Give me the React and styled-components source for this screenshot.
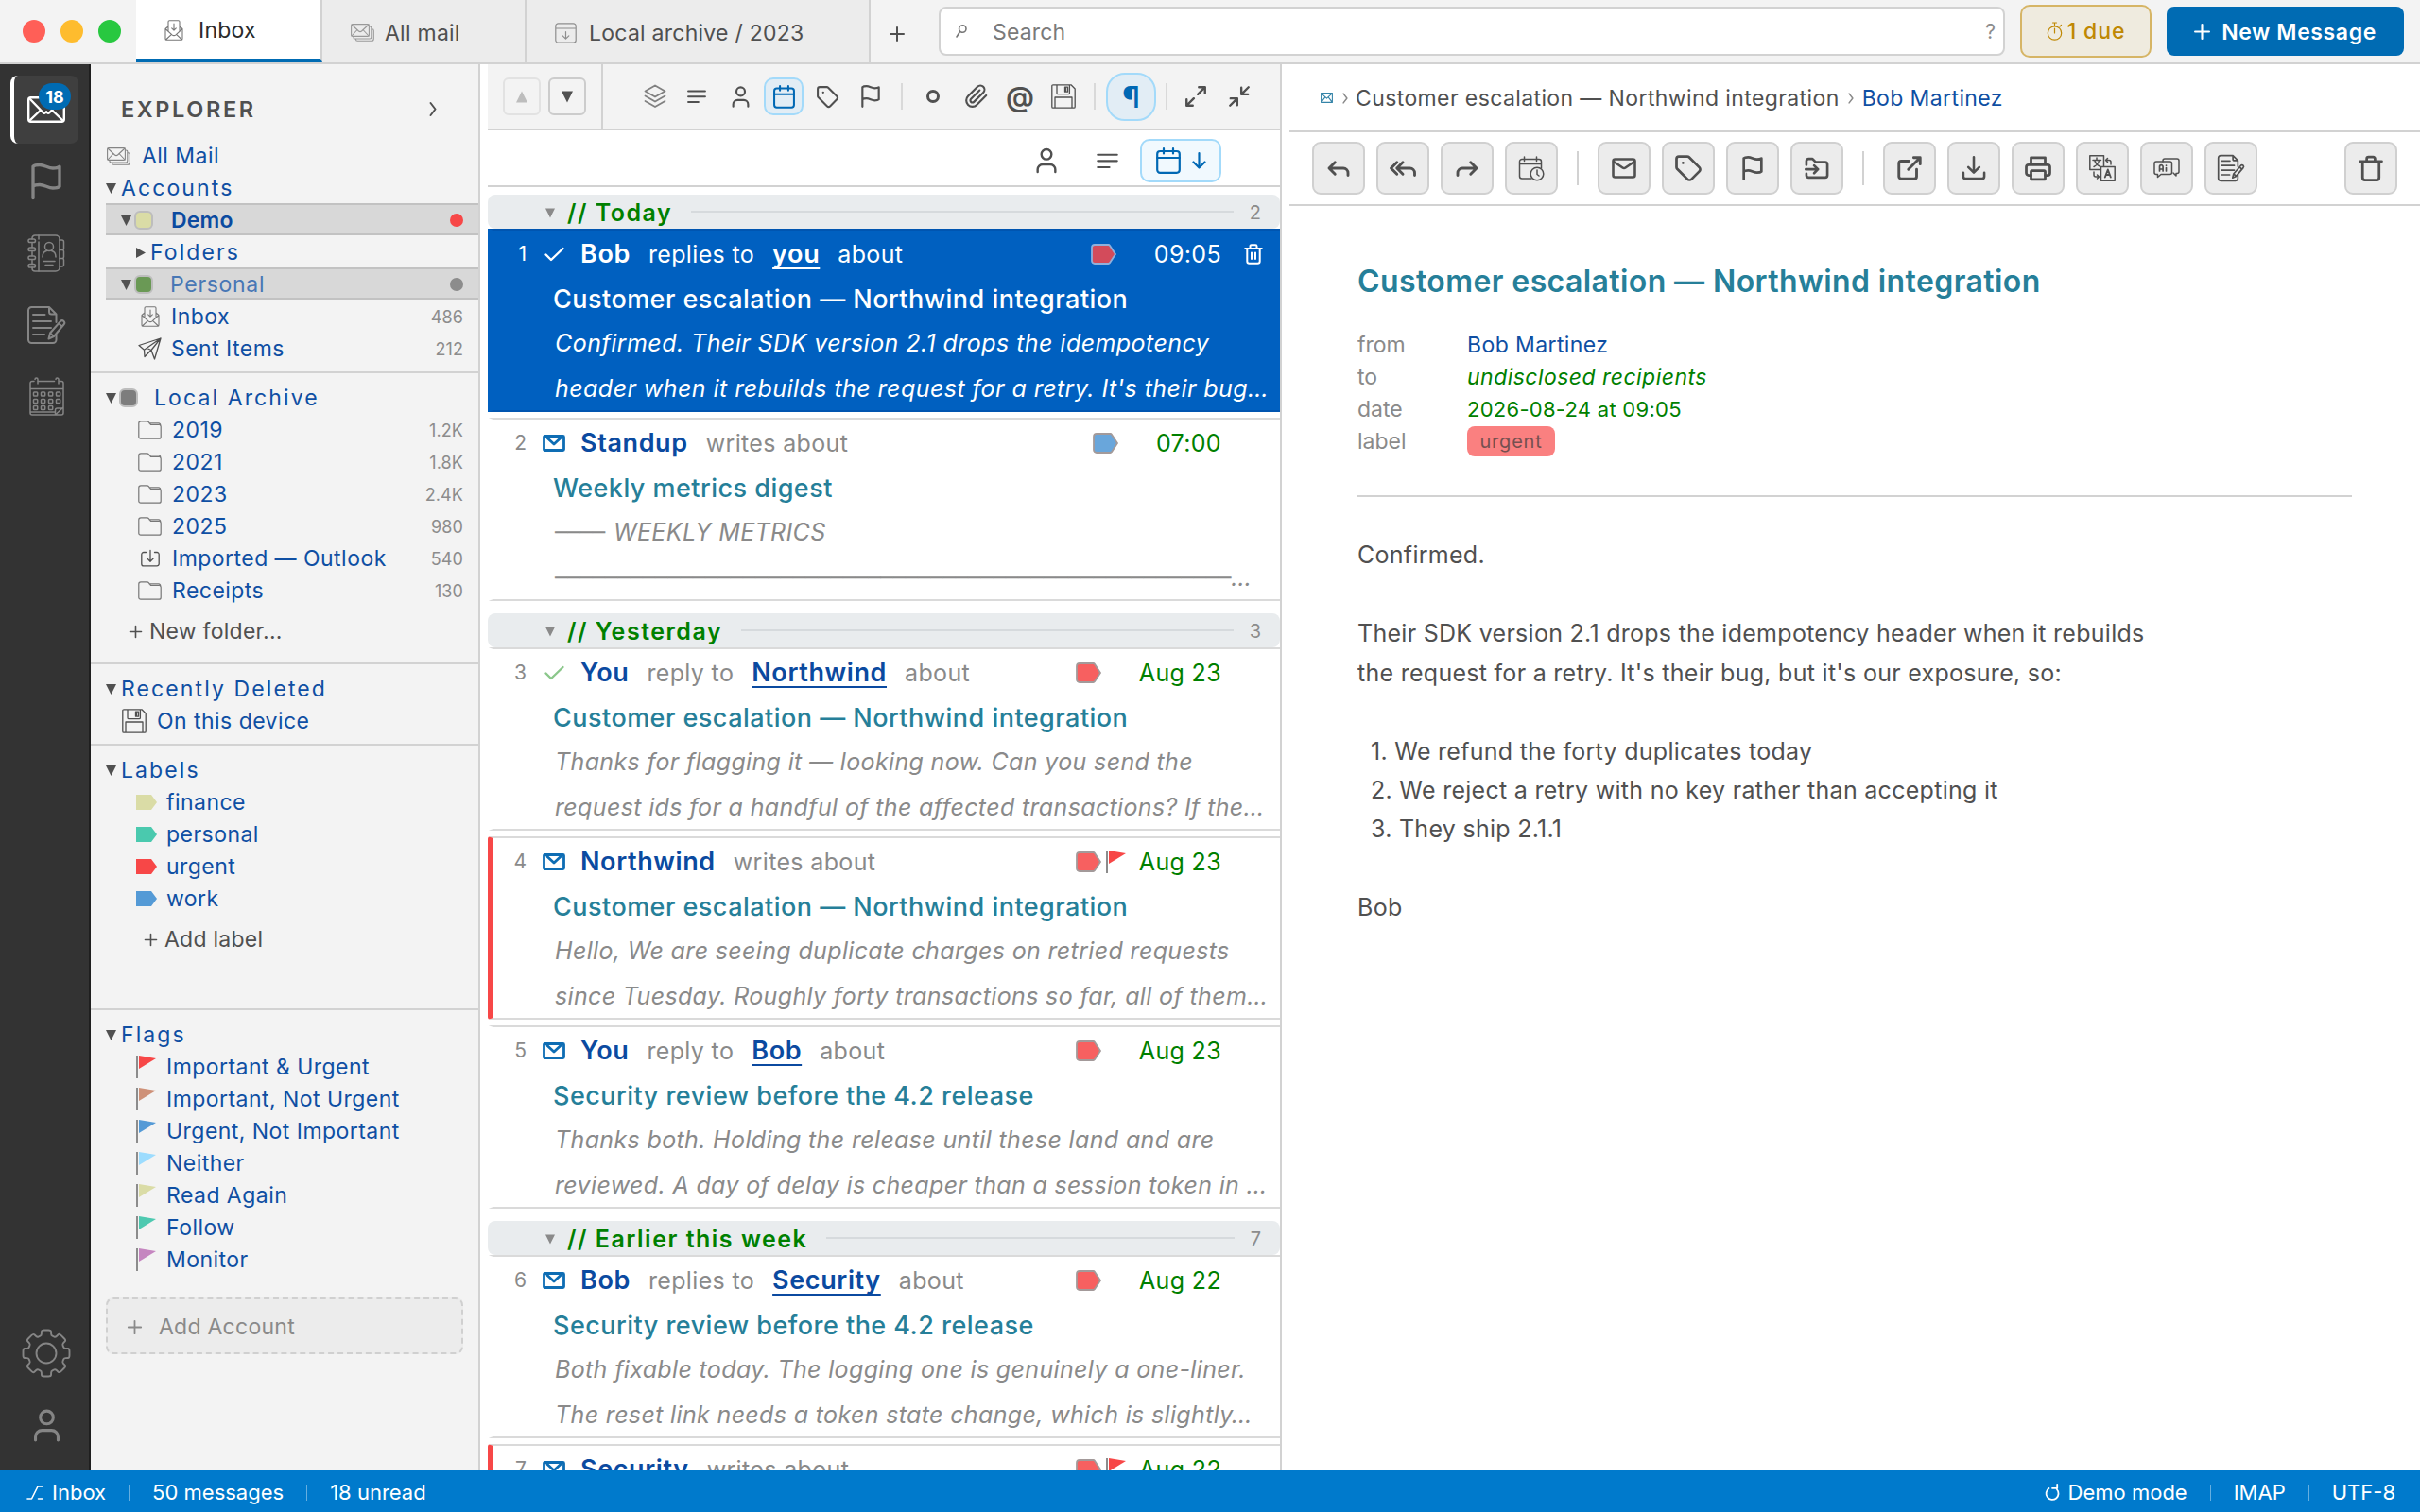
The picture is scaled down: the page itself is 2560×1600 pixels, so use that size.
import React from 'react';
import styled, { createGlobalStyle, css } from 'styled-components';

const GlobalStyle = createGlobalStyle`
  * { box-sizing: border-box; }
  html, body { margin: 0; padding: 0; }
  body {
    width: 2560px;
    height: 1600px;
    overflow: hidden;
    background: #ffffff;
    color: #505050;
    font-family: Inter, "Noto Sans", sans-serif;
    font-size: 23px;
  }
`;

/* ---------- icons ---------- */

const Svg = styled.svg`
  display: block;
  flex: none;
  overflow: visible;
`;

const Line = ({ w, h = w, vw = 24, vh = 24, sw = 2, children, color = 'currentColor' }) => (
  <Svg width={w} height={h} viewBox={`0 0 ${vw} ${vh}`} fill="none" stroke={color}
    strokeWidth={sw} strokeLinecap="round" strokeLinejoin="round">
    {children}
  </Svg>
);

const Envelope = () => (
  <Line w={40} h={28} vw={40} vh={28} sw={2.4}>
    <rect x="1.2" y="1.2" width="37.6" height="25.6" rx="2.5" />
    <path d="M2 2l15 15.5c.8.8 1.4.4 3-1.3 1.600 1.700 2.200 2.100 3 1.300L38 2M2.500 25.500L14 14.500M37.500 25.500L26 14.500" />
  </Line>
);

const FlagIcon = ({ size = 26, sw = 2 }) => (
  <Line w={size} sw={sw}>
    <path d="M4 15s1-1 4-1 5 2 8 2 4-1 4-1V3s-1 1-4 1-5-2-8-2-4 1-4 1v19" />
  </Line>
);

const Contacts = () => (
  <Line w={40} h={40} vw={40} vh={40} sw={1.5}>
    <path d="M5 5V4a3 3 0 0 1 3-3h22a4 4 0 0 1 4 4v30a4 4 0 0 1-4 4H8a3 3 0 0 1-3-3v-1M5 9.500v4M5 18.500v4M5 27.500v3.500" />
    <path d="M12 1v4M12 8v31" />
    <rect x="1" y="5" width="7.500" height="3.600" rx="1.800" />
    <rect x="1" y="14" width="7.500" height="3.600" rx="1.800" />
    <rect x="1" y="23" width="7.500" height="3.600" rx="1.800" />
    <rect x="1" y="31.500" width="7.500" height="3.600" rx="1.800" />
    <path d="M34 6h2.500a2 2 0 0 1 2 2v7a1.500 1.500 0 0 1-1.500 1.500h-3M34 16.500h3a1.500 1.500 0 0 1 1.500 1.500v6a1.500 1.500 0 0 1-1.500 1.500h-3M34 25.500h3a1.500 1.500 0 0 1 1.500 1.500v5a2 2 0 0 1-2 2H34" />
    <circle cx="23" cy="13" r="4.500" />
    <path d="M16 24c0-3.500 2-6 4.500-6.500M30 24c0-3.500-2-6-4.500-6.500M17 28.500h12M19 32.500h8" />
  </Line>
);

const Notes = ({ size = 40, sw = 2 }) => (
  <Line w={size} vw={40} vh={40} sw={sw}>
    <path d="M30.500 30v5.500A3.500 3.500 0 0 1 27 39H4.500A3.500 3.500 0 0 1 1 35.500v-31A3.500 3.500 0 0 1 4.500 1H23l7.500 7.500V17M23 1v5a2.500 2.500 0 0 0 2.500 2.500h5" />
    <path d="M6 9h12.500M6 16h19M6 23h19M6 30h12" />
    <path d="M22.500 34.500l1.500-6L35 16a2.500 2.500 0 0 1 3.500 0 2.500 2.500 0 0 1 0 3.500L28 32z M24 28.500l4 3.500M33 18l3.500 3.500" />
  </Line>
);

const Month = () => (
  <Line w={37} h={40} vw={37} vh={40} sw={1.5}>
    <path d="M5 3.500H3a2 2 0 0 0-2 2V37a2 2 0 0 0 2 2h24.500l8.500-8V5.500a2 2 0 0 0-2-2h-2M9.500 3.500h17M1 11.500h35M1 36h26M36 31v6a2 2 0 0 1-2 2h-6.500M27.500 38.500V34a2 2 0 0 1 2-2h6" />
    <path d="M6 1.500a1.500 1.500 0 0 1 3 0V6M28 1.500a1.500 1.500 0 0 1 3 0V6" />
    {[15, 22.5, 29.5].map((y) => [4.5, 12.5, 20.5, 28.5].map((x) => (
      y > 29 && x > 28 ? null : <rect key={`${x}-${y}`} x={x} y={y} width="4.200" height="4" rx=".8" />
    )))}
  </Line>
);

const gearPath = (() => {
  const pts = [];
  for (let i = 0; i < 8; i += 1) {
    const c = (i * Math.PI) / 4 - Math.PI / 2;
    [[-0.27, 19.5], [-0.2, 25], [0.2, 25], [0.27, 19.5]].forEach(([a, r]) => {
      pts.push([26 + r * Math.cos(c + a), 26 + r * Math.sin(c + a)]);
    });
  }
  const n = pts.length;
  const mix = (p, q, t) => [p[0] + (q[0] - p[0]) * t, p[1] + (q[1] - p[1]) * t];
  const f = (p) => `${p[0].toFixed(2)} ${p[1].toFixed(2)}`;
  return pts.map((p, i) => {
    const a = mix(p, pts[(i + n - 1) % n], 0.28);
    const b = mix(p, pts[(i + 1) % n], 0.28);
    return `${i ? 'L' : 'M'}${f(a)}Q${f(p)} ${f(b)}`;
  }).join('') + 'Z';
})();

const Gear = () => (
  <Line w={52} vw={52} vh={52} sw={1.9}>
    <path d={gearPath} />
    <circle cx="26" cy="26" r="10.500" />
  </Line>
);

const Person = ({ size = 28, sw = 2 }) => (
  <Line w={size} sw={sw}>
    <path d="M19 21v-2a4 4 0 0 0-4-4H9a4 4 0 0 0-4 4v2" />
    <circle cx="12" cy="7" r="4" />
  </Line>
);

const MailStack = () => (
  <Line w={25} h={19} vw={25} vh={19} sw={1.1} color="#858585">
    <rect x=".6" y=".6" width="18.800" height="12.800" rx="1.500" />
    <path d="M1 1l7.500 7c.8.7 2.200.7 3 0L19 1M1 13l6-6.500M19 13l-6-6.500M3 13.500v1.200c0 .8.500 1.300 1.300 1.300H20c1 0 1.800-.8 1.800-1.800V4.500c0-.8-.6-1.500-1.400-1.500M5.500 16v.7c0 .9.700 1.600 1.600 1.600H22c1.300 0 2.300-1 2.300-2.300V7.500c0-1-.7-1.800-1.700-1.800" />
  </Line>
);

const InboxMail = () => (
  <Line w={20} h={22} vw={20} vh={22} sw={1.1} color="#777">
    <path d="M4 7L1 9.500V20a1.300 1.300 0 0 0 1.300 1.300h15.400A1.300 1.300 0 0 0 19 20V9.500L16 7M4 12V2A1.300 1.300 0 0 1 5.300.7h9.400A1.300 1.300 0 0 1 16 2v10M1 9.500l7 6.300c1.200 1 2.800 1 4 0l7-6.300M1.500 21l6-5.700M18.500 21l-6-5.700M10 4v7M7.700 8.900L10 11.200l2.300-2.300" />
  </Line>
);

const ArchiveBox = () => (
  <Line w={23} h={22} vw={23} vh={22} sw={1.2} color="#777">
    <path d="M3.500.8h16A2.700 2.700 0 0 1 22.200 3.500v15a2.700 2.700 0 0 1-2.700 2.700h-16A2.700 2.700 0 0 1 .8 18.500v-15A2.700 2.700 0 0 1 3.500.8zM.8 6h21.400M11.500 9.500v7.500M8.200 13.900l3.300 3.300 3.300-3.300" />
  </Line>
);

const SentIcon = () => (
  <Line w={25} h={24} vw={25} vh={24} sw={1.3}>
    <path d="M24 1L1 8.500l5.500 4.700L24 1 14 13.500l3.500 9.500L24 1M6.500 13.200L7 20.500l5-5.200M7 20.500l7-7M14 13.500l-4.500-2" />
  </Line>
);

const FolderIcon = () => (
  <Line w={25} h={20} vw={25} vh={20} sw={1.2} color="#777">
    <path d="M.8 3A2.200 2.200 0 0 1 3 .8h6.500c1 0 1.500.3 2 1L13.500 4.500h8.700a2 2 0 0 1 2 2V17.200a2 2 0 0 1-2 2H2.800a2 2 0 0 1-2-2zM12 2.800h9.700a2 2 0 0 1 2 2.500" />
  </Line>
);

const ImportIcon = () => (
  <Line w={20} h={18} vw={20} vh={18} sw={1.3}>
    <path d="M5.500 2.500H3A2.200 2.200 0 0 0 .8 4.700v10A2.200 2.200 0 0 0 3 16.900h14a2.200 2.200 0 0 0 2.200-2.200v-10A2.200 2.200 0 0 0 17 2.500h-2.500M10 .5v11.500M6.700 8.900l3.300 3.300 3.300-3.300" />
  </Line>
);

const Floppy = ({ size = 26 }) => (
  <Line w={size} vw={26} vh={26} sw={1.3}>
    <path d="M2 .8h19l4.200 4.200v19a1.200 1.200 0 0 1-1.200 1.200H2A1.200 1.200 0 0 1 .8 24V2A1.200 1.200 0 0 1 2 .8zM4 25V14h18v11M6 1v8.500c0 .8.500 1.200 1.200 1.200h11c.8 0 1.200-.5 1.200-1.200V1M14.500 3.200h3v5h-3zM15.500 3.200v5" />
  </Line>
);

const Layers = () => (
  <Line w={26} h={26} vw={26} vh={26} sw={1.8} color="#808080">
    <path d="M13 1.500l10.500 6L13 13.500 2.500 7.500zM2.500 12.500L13 18.500l10.500-6M2.500 18L13 24l10.500-6" />
  </Line>
);

const TextLines = ({ w = 22, sw = 2.3 }) => (
  <Line w={w} h={(w * 16) / 22} vw={22} vh={16} sw={sw}>
    <path d="M1.200 1.700h19.600M1.200 8h19.600M1.200 14.300h11.800" />
  </Line>
);

const CalendarIcon = ({ size = 26, sw = 2.2 }) => (
  <Line w={size} h={(size * 28) / 26} vw={26} vh={28} sw={sw}>
    <rect x="1.200" y="4" width="23.600" height="22.800" rx="3" />
    <path d="M1.200 11h23.600M8 1.200v5.300M18 1.200v5.300" />
  </Line>
);

const TagIcon = ({ size = 25, sw = 2 }) => (
  <Line w={size} sw={sw}>
    <path d="M12.586 2.586A2 2 0 0 0 11.172 2H4a2 2 0 0 0-2 2v7.172a2 2 0 0 0 .586 1.414l8.704 8.704a2.426 2.426 0 0 0 3.420 0l6.580-6.580a2.426 2.426 0 0 0 0-3.420z" />
    <circle cx="7.500" cy="7.500" r=".6" fill="currentColor" strokeWidth="1" />
  </Line>
);

const Clip = () => (
  <Line w={26} sw={2}>
    <path d="M21.440 11.050l-9.190 9.190a6 6 0 0 1-8.490-8.490l9.190-9.190a4 4 0 0 1 5.660 5.660l-9.200 9.190a2 2 0 0 1-2.830-2.830l8.490-8.480" />
  </Line>
);

const Expand = () => (
  <Line w={26} sw={2.2}>
    <path d="M15 3h6v6M14 10l7-7M9 21H3v-6M3 21l7-7" />
  </Line>
);

const Collapse = () => (
  <Line w={26} sw={2.2}>
    <path d="M14 10l7-7M20.500 10H14V3.500M3 21l7-7M3.500 14H10v6.500" />
  </Line>
);

const Reply = () => (
  <Line w={30} sw={2.3}><path d="M20 18v-2a4 4 0 0 0-4-4H4M9 17l-5-5 5-5" /></Line>
);
const ReplyAll = () => (
  <Line w={30} sw={2.3}><path d="M12 17l-5-5 5-5M22 18v-2a4 4 0 0 0-4-4H7M7 17l-5-5 5-5" /></Line>
);
const Forward = () => (
  <Line w={30} sw={2.3}><path d="M15 17l5-5-5-5M4 18v-2a4 4 0 0 1 4-4h12" /></Line>
);
const Schedule = () => (
  <Line w={28} h={27} vw={28} vh={27} sw={1.5}>
    <path d="M14 24H4a2.500 2.500 0 0 1-2.500-2.500V6A2.500 2.500 0 0 1 4 3.500h18A2.500 2.500 0 0 1 24.500 6v7M1.500 8.500h23M6.500 1v4.500M19.500 1v4.500M11 3.500h4" />
    <circle cx="20" cy="19" r="6.800" />
    <path d="M20 15v4.500l2 1.500" />
  </Line>
);
const MailIcon = () => (
  <Line w={26} h={22} vw={26} vh={22} sw={2.6}>
    <rect x="1.500" y="1.500" width="23" height="19" rx="2" />
    <path d="M2 4l9.500 6.500c.9.600 2.100.6 3 0L24 4" />
  </Line>
);
const MoveIcon = () => (
  <Line w={28} sw={2.3}>
    <path d="M2.500 9V5.500a2 2 0 0 1 2-2H8l3 3h8.500a2 2 0 0 1 2 2v10a2 2 0 0 1-2 2h-15a2 2 0 0 1-2-2V17M2 13h11M9.500 9.500L13 13l-3.500 3.500" />
  </Line>
);
const OpenIcon = () => (
  <Line w={30} sw={2.3}>
    <path d="M15.500 3H21v5.500M11 13L21 3M18 13v6a2 2 0 0 1-2 2H5a2 2 0 0 1-2-2V8a2 2 0 0 1 2-2h6.500" />
  </Line>
);
const DownloadIcon = () => (
  <Line w={28} sw={2.2}>
    <path d="M12 2v13.500M21.500 16v3.500a2 2 0 0 1-2 2h-15a2 2 0 0 1-2-2V16M7 11l5 5 5-5" />
  </Line>
);
const PrinterIcon = () => (
  <Line w={30} sw={2.2}>
    <path d="M6 9V3h12v6M6 18H4a2 2 0 0 1-2-2v-5a2 2 0 0 1 2-2h16a2 2 0 0 1 2 2v5a2 2 0 0 1-2 2h-2" />
    <rect x="6" y="14" width="12" height="7.500" rx="1" />
  </Line>
);
const TranslateIcon = () => (
  <Line w={28} vw={28} vh={28} sw={1.5}>
    <path d="M12 15.500H.8V.8h14.700V12" />
    <rect x="12.500" y="12.500" width="14.700" height="14.700" />
    <path d="M8 3v2M4 5.500h8.500M5 12.500c3-1.500 5-4 5.500-7M6 6.500c1 2.500 3 4.800 6 6" />
    <path d="M16.800 23.500l3-8 3 8M17.800 21h4" strokeWidth="1.900" />
    <path d="M18 5.500h3a2 2 0 0 1 2 2V10M19.500 3.500l-2 2 2 2M5 18v3a2 2 0 0 0 2 2h3M8.500 21l2 2-2 2" />
  </Line>
);
const AiIcon = () => (
  <Line w={28} h={22} vw={28} vh={22} sw={1.5}>
    <path d="M3 4h14.500a2 2 0 0 1 2 2v9.500a2 2 0 0 1-2 2H8L4.500 20.500v-3H3a2 2 0 0 1-2-2V6a2 2 0 0 1 2-2z" />
    <path d="M10 4V3a2 2 0 0 1 2-2h13a2 2 0 0 1 2 2v11.500a2 2 0 0 1-2 2h-1v2.500l-3-3" />
    <path d="M6.500 14V9.500a1.800 1.800 0 0 1 3.600 0V14M6.500 12h3.600M13.500 10.500V14M13.500 8v.2" strokeWidth="1.700" />
  </Line>
);
const TrashPlain = () => (
  <Line w={30} sw={2.2}>
    <path d="M2.800 6.200h18.400M19 6.200V20a2 2 0 0 1-2 2H7a2 2 0 0 1-2-2V6.200M8.500 6V4a1.500 1.500 0 0 1 1.500-1.500h4A1.500 1.500 0 0 1 15.500 4v2" />
  </Line>
);
const TrashSmall = () => (
  <Line w={20} h={22} vw={20} vh={22} sw={2}>
    <path d="M1.200 5h17.600M16.700 5v13.500a2.300 2.300 0 0 1-2.300 2.300H5.600a2.300 2.300 0 0 1-2.300-2.300V5M6.500 4.500V2.500A1.300 1.300 0 0 1 7.800 1.200h4.400a1.300 1.300 0 0 1 1.300 1.300v2M8 9.500v6.500M12 9.500v6.500" />
  </Line>
);
const Unread = () => (
  <Line w={24} h={18} vw={24} vh={18} sw={2.8} color="#0e6db4">
    <rect x="1.500" y="1.500" width="21" height="15" rx="1" />
    <path d="M5 3.500l7 6.500 7-6.500" />
  </Line>
);
const Check = ({ color }) => (
  <Line w={21} h={16} vw={21} vh={16} sw={2.4} color={color}>
    <path d="M1.500 8.500L7 14 19.500 2" />
  </Line>
);
const DownTri = ({ w = 11, h = 11, color = '#505050' }) => (
  <Svg width={w} height={h} viewBox="0 0 11 11"><path d="M0 0h11L5.500 11z" fill={color} /></Svg>
);
const UpTri = ({ color }) => (
  <Svg width={12} height={13} viewBox="0 0 11 11"><path d="M0 11h11L5.500 0z" fill={color} /></Svg>
);
const SideTri = () => (
  <Svg width={10} height={11} viewBox="0 0 10 11"><path d="M0 0v11l10-5.500z" fill="#505050" /></Svg>
);
const LabelMark = ({ color }) => (
  <Svg width={22} height={16} viewBox="0 0 22 16"><path d="M0 0h16l6 8-6 8H0z" fill={color} /></Svg>
);
const FlagMark = ({ color, w = 21 }) => (
  <Svg width={w} height={24} viewBox="0 0 21 24">
    <path d="M0 0h2v24H0z" fill="#8c8c8c" />
    <path d="M3 0l18 3L3 14z" fill={color} />
  </Svg>
);
const MessageTag = ({ fill, edge }) => (
  <Svg width={27} height={22} viewBox="0 0 27 22">
    <path d="M4 1h14.500c.8 0 1.200.3 1.600.9L26 11l-5.900 9.100c-.4.600-.8.9-1.600.9H4a3 3 0 0 1-3-3V4a3 3 0 0 1 3-3z"
      fill={fill} stroke={edge} strokeWidth="1.800" />
  </Svg>
);
const Stopwatch = () => (
  <Line w={17} h={20} vw={17} vh={20} sw={1.2} color="#bf8803">
    <circle cx="8.500" cy="12" r="7.200" />
    <path d="M8.500 12V7M8.500 4.500V1.500M6.500 1h4M14 5l1.500-1.500" />
  </Line>
);
const TinyMail = () => (
  <Line w={13} h={11} vw={13} vh={11} sw={1.1} color="#3584a8">
    <path d="M.6.6h11.800v9.800H.6zM.6.6l5.900 5.500L12.400.6M.6 10.400l4.200-5.500M12.400 10.400L8.200 4.900" />
  </Line>
);
const Chevron = ({ w = 8, h = 15, color = '#505050', sw = 2 }) => (
  <Line w={w} h={h} vw={8} vh={15} sw={sw} color={color}><path d="M1.500 1l5 6.500-5 6.500" /></Line>
);
const Lens = () => (
  <Line w={12} h={14} vw={12} vh={14} sw={1.6} color="#777">
    <circle cx="7.300" cy="4.500" r="3.700" /><path d="M4.500 7.500L1 13" />
  </Line>
);
const Branch = () => (
  <Line w={18} h={15} vw={18} vh={15} sw={1.6}><path d="M1 14h4.500L12 1h5M12.500 14H17" /></Line>
);
const Refresh = () => (
  <Line w={16} h={19} vw={16} vh={19} sw={1.8}>
    <path d="M4.500 5A6.500 6.500 0 1 0 12.800 6M8 4.800h5.200V.8" />
  </Line>
);

/* ---------- shell ---------- */

const Shell = styled.div`
  display: grid;
  grid-template-rows: 68px 1fr 44px;
  width: 2560px;
  height: 1600px;
`;

const TopBar = styled.header`
  display: flex;
  align-items: stretch;
  background: #f3f3f3;
  border-bottom: 2px solid #d2d2d2;
`;

const Lights = styled.div`
  display: flex;
  align-items: center;
  gap: 16px;
  width: 144px;
  padding-left: 24px;
`;
const Light = styled.i`
  width: 24px;
  height: 24px;
  border-radius: 50%;
  background: ${(p) => p.$color};
`;

const Tab = styled.div`
  display: flex;
  align-items: center;
  gap: ${(p) => p.$gap}px;
  width: ${(p) => p.$w}px;
  padding-left: 30px;
  padding-top: ${(p) => (p.$on ? 2 : 3)}px;
  font-size: 23px;
  letter-spacing: 0.25px;
  white-space: pre;
  color: ${(p) => (p.$on ? '#2b2b2b' : '#505050')};
  background: ${(p) => (p.$on ? '#ffffff' : '#ececec')};
  border-right: 2px solid #d2d2d2;
  border-bottom: ${(p) => (p.$on ? '4px solid #006bb3' : '0')};
  > svg { opacity: ${(p) => (p.$on ? 1 : 0.8)}; }
`;

const AddTab = styled.div`
  display: flex;
  align-items: center;
  justify-content: center;
  width: 56px;
  padding-top: 6px;
  margin-right: 16px;
`;

const SearchBox = styled.div`
  display: flex;
  align-items: center;
  align-self: center;
  width: 1128px;
  height: 52px;
  padding: 0 8px 0 16px;
  border: 2px solid #d2d2d2;
  border-radius: 8px;
  background: #ffffff;
  color: #7a7a7a;
  > svg { margin-right: 27px; }
  > span { flex: 1; padding-top: 1px; font-size: 23px; letter-spacing: 0.15px; }
`;

const Help = styled.b`
  font-weight: 400;
  font-size: 21px;
  padding-top: 1px;
  color: #8c8c8c;
`;

const DueChip = styled.div`
  display: flex;
  align-items: center;
  justify-content: center;
  gap: 5px;
  align-self: center;
  width: 139px;
  height: 56px;
  margin-left: 16px;
  border: 2px solid #d6b566;
  border-radius: 10px;
  background: #efebdf;
  color: #bf8803;
  font-size: 23px;
  font-weight: 500;
  letter-spacing: 0.9px;
`;

const Compose = styled.div`
  display: flex;
  align-items: center;
  justify-content: center;
  gap: 12px;
  align-self: center;
  width: 251px;
  height: 52px;
  padding-top: 1px;
  margin-left: 16px;
  border-radius: 8px;
  background: #006bb3;
  color: #ffffff;
  font-size: 23px;
  font-weight: 600;
  letter-spacing: 0.6px;
`;

const Main = styled.div`
  display: grid;
  grid-template-columns: 96px 412px 840px 1fr;
  min-height: 0;
`;

/* ---------- rail ---------- */

const Rail = styled.nav`
  display: flex;
  flex-direction: column;
  gap: 4px;
  padding: 12px 11px 12px 11px;
  background: #333333;
  border-right: 2px solid #1f1f1f;
  color: #858585;
`;
const RailItem = styled.div`
  position: relative;
  display: flex;
  align-items: center;
  justify-content: center;
  width: 72px;
  height: 72px;
  border-left: 4px solid transparent;
  border-radius: 8px;
  ${(p) => p.$on && css`
    background: #3f3f3f;
    color: #ffffff;
    border-left-color: #ffffff;
  `}
`;
const RailSpacer = styled.div`flex: 1;`;
const Badge = styled.span`
  position: absolute;
  left: 26px;
  top: 8px;
  display: flex;
  align-items: center;
  justify-content: center;
  width: 34px;
  height: 28px;
  border-radius: 14px;
  background: #006bb3;
  color: #ffffff;
  font-size: 18px;
  font-weight: 700;
`;

/* ---------- sidebar ---------- */

const Sidebar = styled.aside`
  background: #f3f3f3;
  border-right: 2px solid #d2d2d2;
  overflow: hidden;
`;
const SideHead = styled.div`
  display: flex;
  align-items: center;
  justify-content: space-between;
  height: 79px;
  padding: 15px 44px 0 32px;
  font-size: 23.5px;
  font-weight: 600;
  letter-spacing: 2.6px;
`;
const Section = styled.section`
  padding: ${(p) => (p.$first ? 0 : 9)}px 0 ${(p) => p.$bottom}px;
  border-top: ${(p) => (p.$first ? 0 : 2)}px solid #d2d2d2;
  ${(p) => p.$first && css`> div { padding-top: 2px; }`}
`;
const HeadRow = styled.div`
  display: flex;
  align-items: center;
  height: 34px;
  padding-left: ${(p) => p.$pad || 16}px;
  color: #0f4fa3;
  font-size: 23px;
  letter-spacing: 2.1px;
  white-space: pre;
  > svg { margin-right: ${(p) => (p.$tight ? 3 : 5)}px; }
`;
const Swatch = styled.i`
  width: 20px;
  height: 20px;
  border: 2px solid #bdbdbd;
  border-radius: 6px;
  background: ${(p) => p.$color};
  margin-right: ${(p) => p.$gap}px;
`;
const AccountRow = styled.div`
  display: flex;
  align-items: center;
  height: 34px;
  margin-left: 16px;
  padding: 0 16px;
  border-top: 2px solid #c2c2c2;
  border-bottom: 2px solid #c2c2c2;
  background: #d8d8d8;
  color: ${(p) => (p.$on ? '#0b4aa0' : '#4877b5')};
  font-size: 23px;
  font-weight: ${(p) => (p.$on ? 600 : 400)};
  letter-spacing: ${(p) => (p.$on ? 0.2 : 0.7)}px;
  > svg { margin-right: 3px; }
  > span { flex: 1; }
`;
const StateDot = styled.i`
  width: 14px;
  height: 14px;
  border-radius: 50%;
  background: ${(p) => p.$color};
`;
const Item = styled.div`
  display: flex;
  align-items: center;
  height: 34px;
  padding: 0 16px 0 ${(p) => p.$pad}px;
  color: #0f4fa3;
  font-size: 23px;
  letter-spacing: 0.46px;
  white-space: pre;
`;
const IconSlot = styled.span`
  display: flex;
  justify-content: ${(p) => (p.$center ? 'center' : 'flex-start')};
  width: ${(p) => p.$w}px;
  margin-right: ${(p) => p.$gap}px;
  color: #505050;
`;
const Count = styled.span`
  margin-left: auto;
  color: #8c8c8c;
  font-size: 18px;
  letter-spacing: 0.1px;
`;
const AddRow = styled.div`
  display: flex;
  align-items: center;
  height: 34px;
  margin-top: 9px;
  padding-left: ${(p) => p.$pad}px;
  color: #505050;
  font-size: 23px;
  letter-spacing: 0.25px;
  gap: 8px;
`;
const AddAccount = styled.div`
  display: flex;
  align-items: center;
  gap: 18px;
  width: 378px;
  height: 60px;
  margin: 23px 0 0 16px;
  padding: 2px 0 0 21px;
  border: 2px dashed #d0d0d0;
  border-radius: 8px;
  background: #ececec;
  color: #8a8a8a;
  font-size: 23px;
  letter-spacing: 0.25px;
`;

/* ---------- message list ---------- */

const List = styled.section`
  display: flex;
  flex-direction: column;
  min-height: 0;
  margin-left: 8px;
  width: 840px;
  border-right: 2px solid #d2d2d2;
  overflow: hidden;
`;
const Filters = styled.div`
  display: flex;
  flex: none;
  height: 70px;
  background: #f3f3f3;
  border-bottom: 2px solid #d2d2d2;
`;
const Steps = styled.div`
  display: flex;
  gap: 8px;
  align-items: center;
  width: 122px;
  padding: 0 0 0 16px;
  border-right: 2px solid #d2d2d2;
`;
const Step = styled.div`
  display: flex;
  align-items: center;
  justify-content: center;
  width: 40px;
  height: 40px;
  border: 2px solid ${(p) => (p.$off ? '#e2e2e2' : '#cccccc')};
  border-radius: 6px;
`;
const FilterBar = styled.div`
  display: flex;
  align-items: center;
  gap: 4px;
  padding-left: 36px;
`;
const Filter = styled.div`
  display: flex;
  align-items: center;
  justify-content: center;
  width: ${(p) => p.$w || 42}px;
  height: ${(p) => p.$h || 40}px;
  border: 2px solid ${(p) => (p.$on ? '#a3dafa' : 'transparent')};
  border-radius: ${(p) => p.$r || 10}px;
  background: ${(p) => (p.$on ? '#e2edf5' : 'transparent')};
  color: ${(p) => (p.$on ? '#0068b4' : '#505050')};
  font-weight: 600;
  font-size: ${(p) => p.$font || 28}px;
  line-height: 1;
`;
const Rule = styled.i`
  width: 2px;
  height: 28px;
  margin: 0 ${(p) => (p.$tight ? 5 : 7)}px 0 ${(p) => (p.$tight ? 6 : 7)}px;
  background: #d9d9d9;
`;
const Dot = styled.i`
  width: 14px;
  height: 14px;
  border: 3px solid #505050;
  border-radius: 50%;
`;
const SortBar = styled.div`
  display: flex;
  flex: none;
  align-items: center;
  justify-content: flex-end;
  gap: 22px;
  height: 60px;
  padding: 6px 62px 0 0;
  border-bottom: 2px solid #d2d2d2;
  color: #505050;
`;
const Sort = styled.div`
  display: flex;
  align-items: center;
  justify-content: center;
  width: 42px;
`;
const SortOn = styled.div`
  display: flex;
  align-items: center;
  justify-content: center;
  gap: 12px;
  width: 86px;
  height: 46px;
  margin-left: -8px;
  border: 2px solid #a3dafa;
  border-radius: 10px;
  background: #f1f9fe;
  color: #0068b4;
`;
const Scroll = styled.div`
  flex: 1;
  min-height: 0;
  padding-top: 8px;
  overflow: hidden;
`;
const Group = styled.div`
  display: flex;
  align-items: center;
  height: 36px;
  margin-top: ${(p) => (p.$first ? 0 : 13)}px;
  padding: 2px 20px 0 61px;
  border-radius: 8px;
  background: #e9ecee;
  color: #008000;
  font-size: 25px;
  font-weight: 600;
  letter-spacing: 1.5px;
  white-space: pre;
  > svg { margin-right: 13px; }
  > hr {
    flex: 1;
    height: 2px;
    margin: 0 17px 2px 20px;
    border: 0;
    background: #d6dadd;
  }
  > small {
    color: #8c8c8c;
    font-size: 20px;
    font-weight: 400;
    letter-spacing: 0;
  }
`;
const Message = styled.article`
  height: 194px;
  margin-top: ${(p) => (p.$gap ? 6 : 0)}px;
  padding-top: 1px;
  border-top: 2px solid ${(p) => (p.$on ? '#0055b0' : '#dadada')};
  border-bottom: 2px solid ${(p) => (p.$on ? '#0055b0' : '#dadada')};
  border-left: 6px solid ${(p) => (p.$flag ? '#f74747' : 'transparent')};
  border-radius: ${(p) => (p.$on ? 0 : 3)}px 0 0 ${(p) => (p.$on ? 0 : 3)}px;
  background: ${(p) => (p.$on ? '#0060c0' : 'transparent')};
  color: ${(p) => (p.$on ? '#ffffff' : '#8a8a8a')};
  --name: ${(p) => (p.$on ? '#ffffff' : '#0b4aa0')};
  --subject: ${(p) => (p.$on ? '#ffffff' : '#267f99')};
  --date: ${(p) => (p.$on ? '#ffffff' : '#008000')};
  --track: ${(p) => (p.$on ? '0.45px' : '0.35px')};
`;
const Top = styled.div`
  display: flex;
  align-items: center;
  height: 47.5px;
  padding-right: 18px;
  font-size: 25px;
  letter-spacing: 0.35px;
  white-space: pre;
`;
const Num = styled.span`
  width: 35px;
  text-align: right;
  font-size: 21px;
  letter-spacing: 0;
`;
const Mark = styled.span`
  display: flex;
  justify-content: center;
  width: 24px;
  margin: 0 16px 0 17px;
`;
const Name = styled.b`
  color: var(--name);
  font-size: 27px;
  font-weight: 600;
  letter-spacing: 0.6px;
  text-decoration: ${(p) => (p.$link ? 'underline' : 'none')};
  text-decoration-thickness: 2px;
  text-underline-offset: 5px;
`;
const Verb = styled.span`
  margin: 0 19px;
`;
const Fill = styled.span`flex: 1;`;
const FlagSlot = styled.span`
  width: 40px;
  padding-left: 5px;
`;
const When = styled.span`color: var(--date);`;
const TrashSlot = styled.span`
  width: 44px;
  padding-left: 24px;
`;
const Subject = styled.div`
  height: 47.5px;
  padding-left: 63px;
  line-height: 47.5px;
  color: var(--subject);
  font-size: 27px;
  font-weight: 500;
  letter-spacing: 0.47px;
  white-space: pre;
`;
const Preview = styled.div`
  display: flex;
  height: 47.5px;
  padding-left: 65px;
  line-height: 47.5px;
  font-size: 25px;
  font-style: italic;
  letter-spacing: var(--track);
  white-space: pre;
`;
const Dashes = styled.span`
  margin-right: ${(p) => p.$gap || 0}px;
  font-family: "DejaVu Sans Mono", monospace;
  font-size: 22px;
  font-style: normal;
  letter-spacing: 0;
`;

/* ---------- reader ---------- */

const Reader = styled.section`
  min-width: 0;
  margin-left: 16px;
`;
const Crumbs = styled.div`
  display: flex;
  align-items: center;
  height: 72px;
  padding: 1px 0 0 33px;
  border-bottom: 2px solid #d2d2d2;
  font-size: 23px;
  letter-spacing: 0.39px;
  white-space: pre;
  > svg + svg { margin: 0 8px 0 10px; }
  > span + svg { margin: 0 9px 0 9px; }
`;
const Sender = styled.span`color: #0f4fa3;`;
const Actions = styled.div`
  display: flex;
  align-items: center;
  gap: 12px;
  height: 78px;
  padding: 11px 24px 11px;
  border-bottom: 2px solid #d2d2d2;
`;
const Action = styled.div`
  display: flex;
  align-items: center;
  justify-content: center;
  width: 56px;
  height: 56px;
  border: 2px solid #d0d0d0;
  border-radius: 9px;
  background: #ececec;
  color: #505050;
`;
const Divider = styled.i`
  width: 2px;
  height: 36px;
  margin: 0 8px;
  background: #d2d2d2;
`;
const Body = styled.div`
  padding: 56px 72px 0;
`;
const Title = styled.h1`
  margin: 0;
  height: 48px;
  line-height: 48px;
  color: #267f99;
  font-size: 32px;
  font-weight: 600;
  letter-spacing: 0.4px;
`;
const Meta = styled.dl`
  display: grid;
  grid-template-columns: 116px 1fr;
  grid-auto-rows: 34px;
  align-items: center;
  margin: 26px 0 0;
  padding-bottom: 40px;
  border-bottom: 2px solid #d2d2d2;
  font-size: 23px;
  dt { color: #8a8a8a; }
  dd { margin: 0; letter-spacing: 0.4px; }
`;
const Green = styled.span`
  color: #008000;
  font-size: ${(p) => (p.$date ? 22 : 23)}px;
  font-style: ${(p) => (p.$date ? 'normal' : 'italic')};
  letter-spacing: ${(p) => (p.$date ? 0.27 : 0.46)}px;
`;
const Pill = styled.span`
  display: flex;
  align-items: center;
  justify-content: center;
  width: 93px;
  height: 32px;
  border-radius: 8px;
  background: #fa8080;
  color: #755050;
  font-size: 20px;
  letter-spacing: 0.8px;
`;
const Copy = styled.div`
  margin-top: 41px;
  font-size: 25px;
  line-height: 41.6px;
  letter-spacing: 0.28px;
  white-space: pre;
  color: #505050;
  p { margin: 0 0 41.6px; }
`;
const Numbered = styled.div`
  margin: 0 0 41.6px;
  padding-left: 14px;
  line-height: 41px;
`;

/* ---------- status bar ---------- */

const Status = styled.footer`
  display: flex;
  align-items: center;
  padding: 2px 26px 0 28px;
  background: #007acc;
  color: #ffffff;
  font-size: 22px;
  white-space: pre;
  > svg { margin-right: 9px; }
`;
const Bar = styled.i`
  width: 1px;
  height: 17px;
  margin: 0 24px;
  background: rgba(255, 255, 255, 0.4);
`;

/* ---------- data ---------- */

const archive = [
  ['2019', '1.2K'], ['2021', '1.8K'], ['2023', '2.4K'], ['2025', '980'],
  ['Imported — Outlook', '540'], ['Receipts', '130'],
];
const labels = [['finance', '#dadca6'], ['personal', '#4ac9ae'], ['urgent', '#f74747'], ['work', '#549ad6']];
const flags = [
  ['Important & Urgent', '#f74747'], ['Important, Not Urgent', '#ce9178'],
  ['Urgent, Not Important', '#549ad6'], ['Neither', '#9cdcfe'], ['Read Again', '#dadca6'],
  ['Follow', '#4ec9b0'], ['Monitor', '#c586c0'],
];

const RED = { fill: '#f76060', edge: '#a39a9a' };
const BLUE = { fill: '#69a6db', edge: '#a39a9a' };
const ON = { fill: '#d34b5b', edge: '#8fb0dc' };

const groups = [
  {
    title: '// Today', count: 2,
    messages: [
      { n: 1, on: true, state: 'done', from: 'Bob', verb: 'replies to', to: 'you', tag: ON, when: '09:05',
        subject: 'Customer escalation — Northwind integration',
        preview: ['Confirmed. Their SDK version 2.1 drops the idempotency', "header when it rebuilds the request for a retry. It's their bug…"] },
      { n: 2, from: 'Standup', verb: 'writes about', tag: BLUE, when: '07:00', subject: 'Weekly metrics digest', dashes: true },
    ],
  },
  {
    title: '// Yesterday', count: 3,
    messages: [
      { n: 3, state: 'replied', from: 'You', verb: 'reply to', to: 'Northwind', tag: RED, when: 'Aug 23',
        subject: 'Customer escalation — Northwind integration',
        preview: ['Thanks for flagging it — looking now. Can you send the', 'request ids for a handful of the affected transactions? If the…'] },
      { n: 4, flag: true, from: 'Northwind', verb: 'writes about', tag: RED, when: 'Aug 23',
        subject: 'Customer escalation — Northwind integration',
        preview: ['Hello, We are seeing duplicate charges on retried requests', 'since Tuesday. Roughly forty transactions so far, all of them…'] },
      { n: 5, from: 'You', verb: 'reply to', to: 'Bob', tag: RED, when: 'Aug 23',
        subject: 'Security review before the 4.2 release',
        preview: ['Thanks both. Holding the release until these land and are', 'reviewed. A day of delay is cheaper than a session token in …'] },
    ],
  },
  {
    title: '// Earlier this week', count: 7,
    messages: [
      { n: 6, from: 'Bob', verb: 'replies to', to: 'Security', tag: RED, when: 'Aug 22',
        subject: 'Security review before the 4.2 release',
        preview: ['Both fixable today. The logging one is genuinely a one-liner.', 'The reset link needs a token state change, which is slightly…'] },
      { n: 7, flag: true, from: 'Security', verb: 'writes about', tag: RED, when: 'Aug 22', preview: [] },
    ],
  },
];

function MessageRow({ m, gap }) {
  return (
    <Message $on={m.on} $flag={m.flag} $gap={gap}>
      <Top>
        <Num>{m.n}</Num>
        <Mark>
          {m.state ? <Check color={m.state === 'done' ? '#ffffff' : '#8bc78b'} /> : <Unread />}
        </Mark>
        <Name>{m.from}</Name>
        <Verb>{m.verb}</Verb>
        {m.to && <Name $link>{m.to}</Name>}
        {m.to && <Verb>about</Verb>}
        <Fill />
        <MessageTag {...m.tag} />
        <FlagSlot>{m.flag && <FlagMark color="#f74747" />}</FlagSlot>
        <When>{m.when}</When>
        <TrashSlot>{m.on && <TrashSmall />}</TrashSlot>
      </Top>
      {m.subject && <Subject>{m.subject}</Subject>}
      {m.dashes ? (
        <>
          <Preview><Dashes $gap={9}>{'─'.repeat(4)}</Dashes>WEEKLY METRICS</Preview>
          <Preview><Dashes>{'─'.repeat(54)}</Dashes>…</Preview>
        </>
      ) : m.preview.map((t) => <Preview key={t}>{t}</Preview>)}
    </Message>
  );
}

export default function App() {
  return (
    <Shell>
      <GlobalStyle />
      <TopBar>
        <Lights><Light $color="#ff5f57" /><Light $color="#febc2e" /><Light $color="#28c840" /></Lights>
        <Tab $on $w={197} $gap={16}><InboxMail />Inbox</Tab>
        <Tab $w={216} $gap={11}><MailStack />All mail</Tab>
        <Tab $w={364} $gap={13}><ArchiveBox />Local archive / 2023</Tab>
        <AddTab><Line w={16} vw={16} vh={16} sw={2}><path d="M8 1v14M1 8h14" /></Line></AddTab>
        <SearchBox><Lens /><span>Search</span><Help>?</Help></SearchBox>
        <DueChip><Stopwatch />1 due</DueChip>
        <Compose>
          <Line w={17} vw={16} vh={16} sw={2}><path d="M8 1v14M1 8h14" /></Line>
          New Message
        </Compose>
      </TopBar>

      <Main>
        <Rail>
          <RailItem $on><Envelope /><Badge>18</Badge></RailItem>
          <RailItem><FlagIcon size={42} sw={1.9} /></RailItem>
          <RailItem><Contacts /></RailItem>
          <RailItem><Notes /></RailItem>
          <RailItem><Month /></RailItem>
          <RailSpacer />
          <RailItem><Gear /></RailItem>
          <RailItem><Person size={41} sw={1.8} /></RailItem>
        </Rail>

        <Sidebar>
          <SideHead>EXPLORER<Chevron /></SideHead>
          <Section $first $bottom={8}>
            <Item $pad={17}><IconSlot $w={25} $gap={12}><MailStack /></IconSlot>All Mail</Item>
            <HeadRow><DownTri />Accounts</HeadRow>
            <AccountRow $on><DownTri /><Swatch $color="#dadca6" $gap={19} /><span>Demo</span><StateDot $color="#f74747" /></AccountRow>
            <HeadRow $pad={48}><SideTri />Folders</HeadRow>
            <AccountRow><DownTri /><Swatch $color="#6a9955" $gap={18} /><span>Personal</span><StateDot $color="#8c8c8c" /></AccountRow>
            <Item $pad={50}><IconSlot $w={25} $gap={10} $center><InboxMail /></IconSlot>Inbox<Count>486</Count></Item>
            <Item $pad={50}><IconSlot $w={25} $gap={10} $center><SentIcon /></IconSlot>Sent Items<Count>212</Count></Item>
          </Section>
          <Section $bottom={16}>
            <HeadRow $tight><DownTri /><Swatch $color="#7d7d7d" $gap={17} />Local Archive</HeadRow>
            {archive.map(([name, count]) => (
              <Item key={name} $pad={50}>
                <IconSlot $w={25} $gap={11} $center>{name.startsWith('Imp') ? <ImportIcon /> : <FolderIcon />}</IconSlot>
                {name}<Count>{count}</Count>
              </Item>
            ))}
            <AddRow $pad={41}>
              <Line w={13} vw={13} vh={13} sw={1.6}><path d="M6.500 .5v12M.5 6.500h12" /></Line>New folder...
            </AddRow>
          </Section>
          <Section $bottom={7}>
            <HeadRow><DownTri />Recently Deleted</HeadRow>
            <Item $pad={33}><IconSlot $w={26} $gap={11}><Floppy /></IconSlot>On this device</Item>
          </Section>
          <Section $bottom={56}>
            <HeadRow><DownTri />Labels</HeadRow>
            {labels.map(([name, color]) => (
              <Item key={name} $pad={48}><IconSlot $w={22} $gap={10}><LabelMark color={color} /></IconSlot>{name}</Item>
            ))}
            <AddRow $pad={57}>
              <Line w={13} vw={13} vh={13} sw={1.6}><path d="M6.500 .5v12M.5 6.500h12" /></Line>Add label
            </AddRow>
          </Section>
          <Section $bottom={0}>
            <HeadRow><DownTri />Flags</HeadRow>
            {flags.map(([name, color]) => (
              <Item key={name} $pad={48}><IconSlot $w={21} $gap={11}><FlagMark color={color} /></IconSlot>{name}</Item>
            ))}
            <AddAccount>
              <Line w={15} vw={15} vh={15} sw={1.8}><path d="M7.500 .8v13.400M.8 7.500h13.400" /></Line>Add Account
            </AddAccount>
          </Section>
        </Sidebar>

        <List>
          <Filters>
            <Steps>
              <Step $off><UpTri color="#bdbdbd" /></Step>
              <Step><DownTri w={12} h={13} /></Step>
            </Steps>
            <FilterBar>
              <Filter $w={38}><Layers /></Filter>
              <Filter><TextLines w={20} /></Filter>
              <Filter><Person size={27} sw={1.9} /></Filter>
              <Filter $on><CalendarIcon size={23} sw={2.3} /></Filter>
              <Filter><TagIcon /></Filter>
              <Filter><FlagIcon /></Filter>
              <Rule />
              <Filter><Dot /></Filter>
              <Filter><Clip /></Filter>
              <Filter $font={30}>@</Filter>
              <Filter><Floppy /></Filter>
              <Rule />
              <Filter $on $w={53} $h={51} $r={20} $font={31}>¶</Filter>
              <Rule $tight />
              <Filter><Expand /></Filter>
              <Filter><Collapse /></Filter>
            </FilterBar>
          </Filters>
          <SortBar>
            <Sort><Person size={32} sw={1.8} /></Sort>
            <Sort><TextLines w={23} sw={2} /></Sort>
            <SortOn>
              <CalendarIcon size={26} />
              <Line w={15} h={18} vw={15} vh={18} sw={2.2}><path d="M7.500 1v15.500M1.500 10.500l6 6 6-6" /></Line>
            </SortOn>
          </SortBar>
          <Scroll>
            {groups.map((g, i) => (
              <React.Fragment key={g.title}>
                <Group $first={i === 0}><DownTri w={10} color="#8a8a8a" />{g.title}<hr /><small>{g.count}</small></Group>
                {g.messages.map((m, j) => <MessageRow key={m.n} m={m} gap={j > 0} />)}
              </React.Fragment>
            ))}
          </Scroll>
        </List>

        <Reader>
          <Crumbs>
            <TinyMail />
            <Chevron w={6} h={12} color="#8a8a8a" />
            <span>Customer escalation — Northwind integration</span>
            <Chevron w={6} h={12} color="#8a8a8a" />
            <Sender>Bob Martinez</Sender>
          </Crumbs>
          <Actions>
            <Action><Reply /></Action>
            <Action><ReplyAll /></Action>
            <Action><Forward /></Action>
            <Action><Schedule /></Action>
            <Divider />
            <Action><MailIcon /></Action>
            <Action><TagIcon size={30} sw={2.2} /></Action>
            <Action><FlagIcon size={28} sw={2.3} /></Action>
            <Action><MoveIcon /></Action>
            <Divider />
            <Action><OpenIcon /></Action>
            <Action><DownloadIcon /></Action>
            <Action><PrinterIcon /></Action>
            <Action><TranslateIcon /></Action>
            <Action><AiIcon /></Action>
            <Action><Notes size={28} sw={2.4} /></Action>
            <Fill />
            <Action><TrashPlain /></Action>
          </Actions>
          <Body>
            <Title>Customer escalation — Northwind integration</Title>
            <Meta>
              <dt>from</dt><dd><Sender>Bob Martinez</Sender></dd>
              <dt>to</dt><dd><Green>undisclosed recipients</Green></dd>
              <dt>date</dt><dd><Green $date>2026-08-24 at 09:05</Green></dd>
              <dt>label</dt><dd><Pill>urgent</Pill></dd>
            </Meta>
            <Copy>
              <p>Confirmed.</p>
              <p>
                Their SDK version 2.1 drops the idempotency header when it rebuilds<br />
                the request for a retry. It's their bug, but it's our exposure, so:
              </p>
              <Numbered>
                <div>1. We refund the forty duplicates today</div>
                <div>2. We reject a retry with no key rather than accepting it</div>
                <div>3. They ship 2.1.1</div>
              </Numbered>
              <p>Bob</p>
            </Copy>
          </Body>
        </Reader>
      </Main>

      <Status>
        <Branch />Inbox<Bar />50 messages<Bar />18 unread
        <Fill />
        <Refresh />Demo mode<Bar />IMAP<Bar />UTF-8
      </Status>
    </Shell>
  );
}
